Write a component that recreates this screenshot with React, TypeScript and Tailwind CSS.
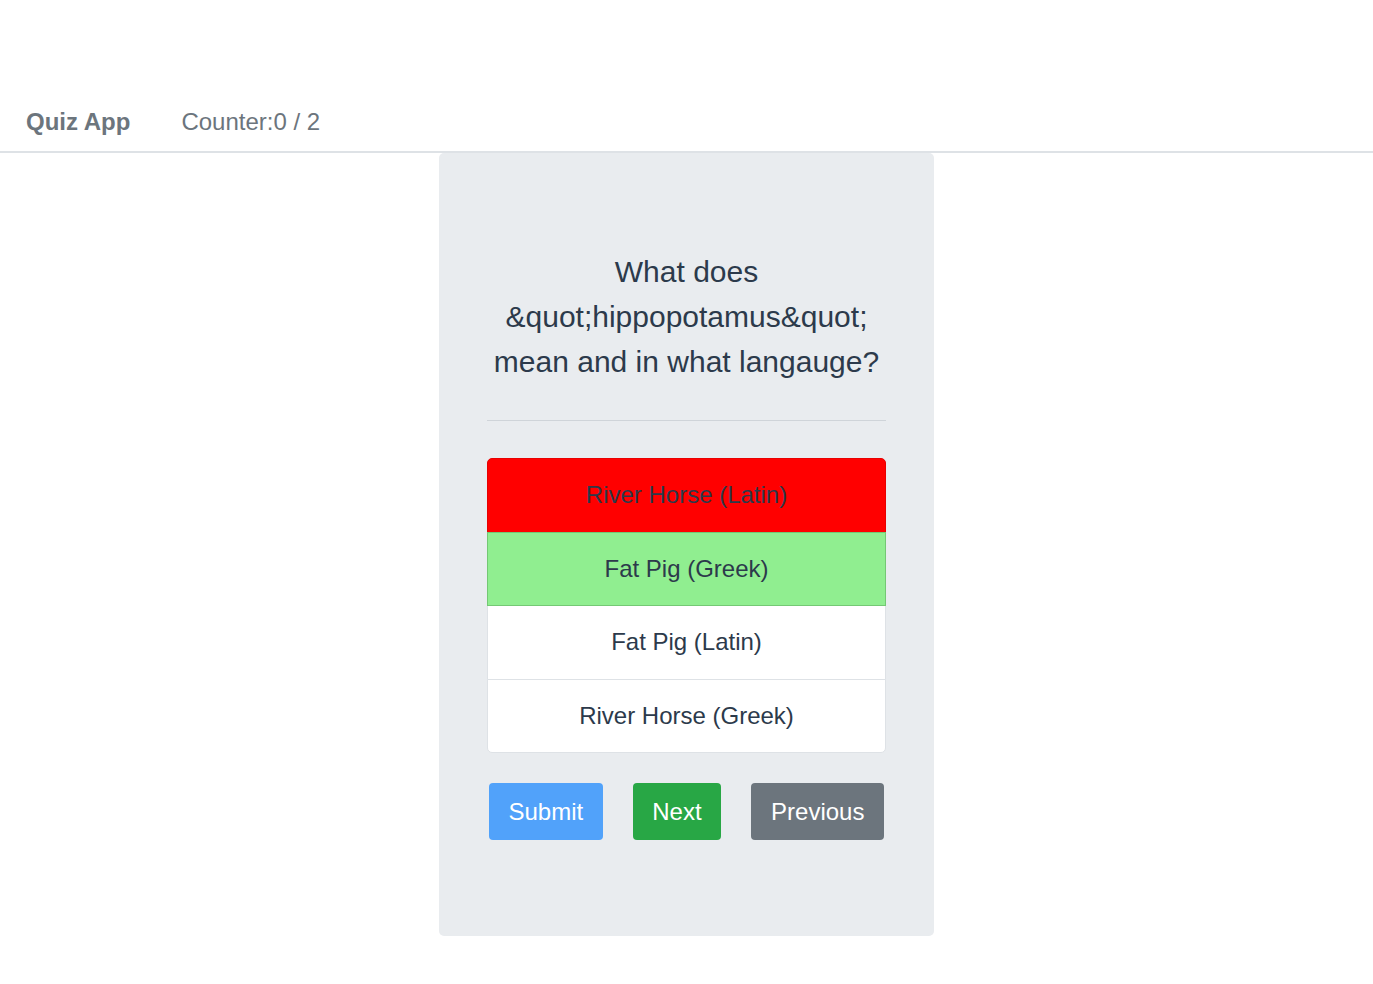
import React from "react";

const answers = [
  { text: "River Horse (Latin)", state: "wrong" },
  { text: "Fat Pig (Greek)", state: "right" },
  { text: "Fat Pig (Latin)", state: "" },
  { text: "River Horse (Greek)", state: "" },
];

const App = () => {
  return (
    <div className="min-h-screen bg-white font-['Liberation_Sans',Arial,sans-serif]">
      <nav className="flex items-center h-[153px] pt-[104px] pb-[11px] px-[26px] border-b-2 border-[#dee2e6]">
        <span className="text-[24px] leading-[36px] font-bold text-[#6c757d]">Quiz App</span>
        <span className="ml-[51px] text-[24px] leading-[36px] text-[#6c757d]">Counter:0 / 2</span>
      </nav>

      <div className="mx-auto w-[495px] bg-[#e9ecef] rounded-[5px] px-[48px] pt-[96px] pb-[96px]">
        <h3 className="text-center text-[30px] leading-[45px] text-[#2c3a4b]">
          What does &amp;quot;hippopotamus&amp;quot; mean and in what langauge?
        </h3>
        <hr className="mt-[36px] mb-[37px] border-t border-[#cfd4d9]" />

        <ul className="flex flex-col rounded-[5px]">
          {answers.map((a, i) => (
            <li
              key={a.text}
              className={
                "h-[74.5px] flex items-center justify-center text-[24px] text-[#2c3a4b] border " +
                (i === 0 ? "rounded-t-[5px] " : "") +
                (i === answers.length - 1 ? "rounded-b-[5px] " : "") +
                (i > 0 ? "-mt-px " : "") +
                (a.state === "wrong"
                  ? "bg-[#ff0000] border-[#e80000]"
                  : a.state === "right"
                  ? "bg-[#90ee90] border-[#74c874] relative"
                  : "bg-white border-[#dee2e6]")
              }
            >
              {a.text}
            </li>
          ))}
        </ul>

        <div className="flex mt-[30px] px-[2px] gap-[30px]">
          <button className="h-[57px] px-[19.5px] rounded-[4px] bg-[#51a2fa] text-white text-[24px]">Submit</button>
          <button className="h-[57px] px-[19.5px] rounded-[4px] bg-[#28a745] text-white text-[24px]">Next</button>
          <button className="h-[57px] px-[20px] rounded-[4px] bg-[#6c757d] text-white text-[24px]">Previous</button>
        </div>
      </div>
    </div>
  );
};

export default App;
